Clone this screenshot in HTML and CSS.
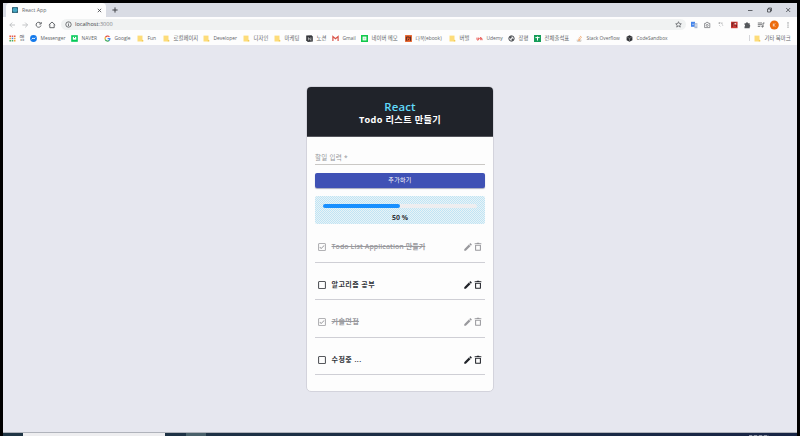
FILE: index.html
```html
<!DOCTYPE html>
<html lang="ko">
<head>
<meta charset="utf-8">
<title>React App</title>
<link rel="stylesheet" href="styles.css">
</head>
<body>
<svg class="defs" width="0" height="0">
  <symbol id="folder" viewBox="0 0 7 7"><path fill="#fddc79" d="M.5.6h5v5.9h-5z"/><path fill="#f3cb55" d="M4.8 4.9h1.5v1.6H4.8z"/></symbol>
  <symbol id="pencil" viewBox="0 0 24 24"><path d="M3 17.25V21h3.75L17.8 9.94l-3.75-3.75zm17.7-10.2a1 1 0 0 0 0-1.42l-2.34-2.34a1 1 0 0 0-1.41 0l-1.84 1.84 3.75 3.75z"/></symbol>
  <symbol id="trash" viewBox="0 0 24 24"><path fill-rule="evenodd" d="M5 19a2 2 0 0 0 2 2h10a2 2 0 0 0 2-2V7H5zM7.500 9h9v9.700h-9zm8-6-1-1h-5l-1 1H4v2.500h16V3z"/></symbol>
  <symbol id="checked" viewBox="0 0 24 24"><path d="M19 3H5a2 2 0 0 0-2 2v14a2 2 0 0 0 2 2h14a2 2 0 0 0 2-2V5a2 2 0 0 0-2-2zm0 16H5V5h14zM17.99 9l-1.41-1.42-6.59 6.59-2.58-2.57-1.42 1.41 4 3.99z"/></symbol>
  <symbol id="blank" viewBox="0 0 24 24"><path d="M19 5v14H5V5zm0-2H5a2 2 0 0 0-2 2v14a2 2 0 0 0 2 2h14a2 2 0 0 0 2-2V5a2 2 0 0 0-2-2z"/></symbol>
</svg>
<div class="window">
  <header class="tabs">
    <div class="tab">
      <svg class="react" viewBox="0 0 7 7"><rect width="7" height="7" rx="1" fill="#315a6b"/><g fill="none" stroke="#50c7e6" stroke-width=".6"><ellipse cx="3.5" cy="3.5" rx="3" ry="1.2"/><ellipse cx="3.5" cy="3.5" rx="3" ry="1.2" transform="rotate(60 3.5 3.5)"/><ellipse cx="3.5" cy="3.5" rx="3" ry="1.2" transform="rotate(120 3.5 3.5)"/></g><circle cx="3.5" cy="3.5" r=".7" fill="#61dafb"/></svg>
      <span class="tab-title">React App</span>
      <svg class="close" viewBox="0 0 5 5"><path d="M.8.8l3.4 3.4M4.2.8.8 4.2"/></svg>
    </div>
    <svg class="plus" viewBox="0 0 6 6"><path d="M3 .4v5.2M.4 3h5.2"/></svg>
    <svg class="controls" viewBox="0 0 44 8"><path d="M0 4.5h4.5M19.5 3h3v3h-3zM20.5 3V2h3v3h-1M38.2 2l4 4M42.2 2l-4 4"/></svg>
  </header>
  <nav class="toolbar">
    <svg class="nav-icons" viewBox="0 0 50 10"><g fill="none" stroke="#b4b6b9" stroke-width=".8"><path d="M6 5H.8M3.2 2.6.8 5l2.4 2.4M13.4 5h5.2M16.2 2.6 18.600 5l-2.400 2.400"/></g><g fill="none" stroke="#55585c" stroke-width=".9"><path d="M31.700 3.400A2.500 2.500 0 1 0 32 5.500M32.200 2v2h-2M39.800 5 43 2l3.200 3M40.800 4.400v3.300h4.400V4.400"/></g></svg>
    <div class="address">
      <svg class="info" viewBox="0 0 7 7"><circle cx="3.5" cy="3.5" r="2.7"/><path d="M3.5 3.1v2M3.5 1.8v.7"/></svg>
      <span class="url">localhost<i>:3000</i></span>
      <svg class="star" viewBox="0 0 7 7"><path d="M3.5.7l.8 1.9 2 .2-1.500 1.300.5 2-1.800-1.100-1.800 1.100.5-2L.7 2.800l2-.2z"/></svg>
    </div>
    <svg class="extensions" viewBox="0 0 104 10">
      <path fill="#4485ec" d="M0 1.8h4v5H0z"/><path fill="#a9b9d2" d="M3.4 3.2h3v5h-3z"/><path d="M1 4.3h2M4 5h1.8M5 4.5v2.4" stroke="#fff" stroke-width=".5"/>
      <g fill="none" stroke="#777a7e" stroke-width=".8"><path d="M13.6 3.4h1.2l.5-1h1.8l.5 1h1.2v4.2h-5.2z"/><circle cx="16.2" cy="5.4" r="1"/></g>
      <path d="M27.5 3c2-1 4 .5 4.3 3M28 5l1.5 1.5" fill="none" stroke="#d0d1d3"/><circle cx="28.3" cy="3.1" r=".6" fill="#777"/><circle cx="31" cy="3.1" r=".5" fill="#888"/>
      <path fill="#cd3a35" d="M40 1.7h6.6v6.5H40z"/><path d="M41.200 7V3h3.200M42.900 5h2.500v2" fill="none" stroke="#6c2225"/><path fill="#fff" d="M43.500 3.200h1.600v1.200h-1.600z"/>
      <path fill="#55585c" d="M53.500 3.300H55a1 1 0 0 1 2 0h1.700V5a1 1 0 0 1 0 1.800v1.400h-5.200V6.600a1 1 0 0 0 0-1.800z"/>
      <g fill="none" stroke="#55585c" stroke-width=".8"><path d="M66.800 3H71M66.800 4.700H71M66.800 6.400h2.500M72 6.600V3h1.500"/><circle cx="71.400" cy="6.600" r=".6"/></g>
      <circle cx="83.300" cy="5" r="4.500" fill="#ec6b0c"/><path d="M82.300 3.500v3M84.400 3.500 82.400 5l2 1.500" fill="none" stroke="#fff" stroke-width=".6"/>
      <g fill="#66696d"><circle cx="97" cy="2.900" r=".55"/><circle cx="97" cy="5" r=".55"/><circle cx="97" cy="7.100" r=".55"/></g>
    </svg>
  </nav>
  <nav class="bookmarks">
    <a><svg viewBox="0 0 7 7"><path fill="#e55a4d" d="M.4.5H2V2H.4zM2.7.5h1.6V2H2.7zM5 .5h1.5V2H5z"/><path fill="#f3a43b" d="M.4 2.7H2v1.5H.4zM5 2.7h1.5v1.5H5zM5 5h1.5v1.5H5z"/><path fill="#4daa62" d="M.4 5H2v1.5H.4zM2.7 5h1.6v1.5H2.7z"/><path fill="#4c83dd" d="M2.7 2.7h1.6v1.5H2.7z"/></svg><span>앱</span></a>
    <a><svg viewBox="0 0 7 7"><circle cx="3.5" cy="3.5" r="3.4" fill="#1379eb"/><path d="M1.7 4.3 3 2.9l1 1 1.3-1.2" fill="none" stroke="#fff" stroke-width=".9"/></svg><span class="latin">Messenger</span></a>
    <a><svg viewBox="0 0 7 7"><path fill="#05c958" d="M.2.2h6.6v6.6H.2z"/><path fill="#fff" d="M1.8 1.8h3.5v2.9H1.8z"/><path fill="#05c958" d="M3 1.8h1v1.3H3z"/></svg><span class="latin">NAVER</span></a>
    <a><svg viewBox="0 0 7 7"><g fill="none" stroke-width="1.2"><path stroke="#e4483b" d="M1.4 2.5A2.4 2.4 0 0 1 5.4 1.8"/><path stroke="#f3b51b" d="M1.3 4.6a2.4 2.4 0 0 1 .1-2.2"/><path stroke="#3aa757" d="M1.3 4.5a2.4 2.4 0 0 0 3.8 1"/><path stroke="#4688ec" d="M5 5.6q.9-.8.9-1.9H3.6"/></g></svg><span class="latin">Google</span></a>
    <a><svg><use href="#folder"/></svg><span class="latin">Fun</span></a>
    <a><svg><use href="#folder"/></svg><span>로컬페이지</span></a>
    <a><svg><use href="#folder"/></svg><span class="latin">Developer</span></a>
    <a><svg><use href="#folder"/></svg><span>디자인</span></a>
    <a><svg><use href="#folder"/></svg><span>마케팅</span></a>
    <a><svg viewBox="0 0 7 7"><path fill="#34363a" d="M.2.5 5.500.2l1.300 1.200v5.200l-5 .3L.2 5.300z"/><path d="M2.400 5.400V2.600l2.500 2.800V2.400" fill="none" stroke="#ddd" stroke-width=".7"/></svg><span>노션</span></a>
    <a><svg viewBox="0 0 7 7"><path fill="none" stroke="#d95247" stroke-width="1.2" d="M.9 6V1.5l2.6 2.3 2.6-2.3V6"/></svg><span class="latin">Gmail</span></a>
    <a><svg viewBox="0 0 7 7"><path fill="#12c94c" d="M0 0h7v7H0z"/><path fill="#fff" d="M1.6 1.6h3.8v3.8H1.6z"/><path fill="#b6ebc5" d="M2.5 2.5h2v2h-2z"/></svg><span class="memo">네이버 메모</span></a>
    <a><svg viewBox="0 0 7 7"><path fill="#e65b20" d="M.1.1h6.8v6.8H.1z"/><path d="M1.4 5.7V2h2.8v1.5M5.5 1.6v4.2M2.8 5.5l1-1.5" fill="none" stroke="#59302a"/></svg><span class="latin">다복(ebook)</span></a>
    <a><svg><use href="#folder"/></svg><span>버벌</span></a>
    <a><svg viewBox="0 0 7 7"><path d="M1 2.600v1.600q0 1 .8 1t.9-1V2.600M4.800 5.200V2.400L3.400 3.600M4.800 3.400q1.300-1.200 1.300 1.800" fill="none" stroke="#e7514c" stroke-width="1"/></svg><span class="latin">Udemy</span></a>
    <a><svg viewBox="0 0 7 7"><circle cx="3.5" cy="3.5" r="2.7" fill="#e9e9ea" stroke="#4b4e52"/><path fill="#4b4e52" d="M1 2.5l2-1.8 1 1.4-1.6 1.7zM4 3.6l2 .3-1.4 2-1.2-.5z"/></svg><span>장평</span></a>
    <a><svg viewBox="0 0 7 7"><path fill="#159d58" d="M0 0h7v7H0z"/><path stroke="#fff" d="M1.4 2.6h4.2M3.5 1.5v4"/></svg><span>전체출석표</span></a>
    <a><svg viewBox="0 0 7 7"><path d="M1.2 4.6v1.7h3.7V4.6" fill="none" stroke="#b9b3ad" stroke-width=".7"/><path d="M2 5.3h2M2.1 4l2.1.6M2.9 2.4l1.8 1.4M4.4.9l1 2" stroke="#ef9550" stroke-width=".8"/></svg><span class="narrow">Stack Overflow</span></a>
    <a><svg viewBox="0 0 7 7"><path fill="#303236" d="M3.5.2 6.4 1.8v3.4L3.5 6.8.6 5.2V1.8z"/><path d="M1.2 2.1l2.3 1.3 2.3-1.3M3.5 3.4V6" fill="none" stroke="#aaa" stroke-width=".5"/></svg><span class="narrow">CodeSandbox</span></a>
    <a class="other"><svg><use href="#folder"/></svg><span>기타 북마크</span></a>
  </nav>
  <main class="page">
    <section class="card">
      <header class="card-head"><h1>React</h1><h2>Todo 리스트 만들기</h2></header>
      <div class="card-body">
        <div class="field">할일 입력 *</div>
        <button class="add">추가하기</button>
        <div class="progress"><div class="track"><div class="fill"></div></div><span class="percent">50 %</span></div>
        <ul class="todos">
          <li class="done"><svg><use href="#checked"/></svg><span>Todo List Application 만들기</span><svg><use href="#pencil"/></svg><svg><use href="#trash"/></svg></li>
          <li><svg><use href="#blank"/></svg><span class="spaced">알고리즘 공부</span><svg><use href="#pencil"/></svg><svg><use href="#trash"/></svg></li>
          <li class="done"><svg><use href="#checked"/></svg><span class="spaced">기술면접</span><svg><use href="#pencil"/></svg><svg><use href="#trash"/></svg></li>
          <li><svg><use href="#blank"/></svg><span class="spaced">수정중 ...</span><svg><use href="#pencil"/></svg><svg><use href="#trash"/></svg></li>
        </ul>
      </div>
    </section>
  </main>
  <footer class="taskbar"><div class="search"></div><div class="task"></div><div class="clock"></div></footer>
</div>
</body>
</html>
```
FILE: styles.css
```css
* { box-sizing: border-box; }
body { margin: 0; background: #000; font-family: "Open Sans", "Noto Sans CJK KR", sans-serif; }
svg { display: block; flex: none; }
.defs { position: absolute; }
.window { width: 794px; height: 433px; margin: 3px 3px 0; display: flex; flex-direction: column; overflow: hidden; background: #fdfdfd; }

.tabs { flex: 0 0 14px; display: flex; align-items: center; background: #d9dce4; }
.tab { width: 100px; height: 14px; margin-left: 3px; padding: 0 4px 0 6px; display: flex; align-items: center; background: #fdfdfd; border-radius: 4px 4px 0 0; }
.react { width: 6px; height: 6px; }
.tab-title { flex: 1; margin-left: 4px; font-size: 5.2px; line-height: 8px; color: #65686c; }
.close { width: 5px; height: 5px; stroke: #404347; stroke-width: .8; }
.plus { width: 6px; height: 6px; margin-left: 6px; stroke: #404347; stroke-width: 1; }
.controls { width: 44px; height: 8px; margin: 0 5px 0 auto; fill: none; stroke: #404347; stroke-width: .8; }

.toolbar { flex: 0 0 15px; display: flex; align-items: center; padding: 0 0 0 6px; }
.nav-icons { width: 50px; height: 10px; }
.address { width: 625px; height: 11px; margin-left: 2px; padding: 0 4px; display: flex; align-items: center; background: #f0f2f2; border-radius: 6px; }
.info { width: 7px; height: 7px; fill: none; stroke: #55585c; stroke-width: .8; }
.url { margin-left: 3px; font-size: 5.6px; line-height: 9px; color: #404347; }
.url i { font-style: normal; color: #85888c; }
.star { width: 7px; height: 7px; margin-left: auto; fill: none; stroke: #55585c; stroke-width: .7; }
.extensions { width: 104px; height: 10px; margin-left: 5px; }

.bookmarks { flex: 0 0 13px; display: grid; align-items: center; padding: 0 0 1px 6px; grid-template-columns: 21px 41px 33px 33px 26px 40px 40px 31px 32px 26px 29px 44px 44px 27px 32px 26px 42px 50px 121px 50px; font-size: 5.4px; line-height: 8px; color: #606367; }
.bookmarks a { display: flex; align-items: center; white-space: nowrap; }
.bookmarks svg { width: 7px; height: 7px; }
.bookmarks span { margin-left: 3.5px; }
.bookmarks .latin { font-size: 4.9px; }
.bookmarks .narrow { font-size: 4.8px; }
.other { margin-left: 7px; position: relative; }
.other::before { content: ""; position: absolute; left: -5px; width: 1px; height: 6px; background: #d5d6da; }

.page { flex: 0 0 388px; padding-top: 41px; background: #e6e7ef; border-bottom: 1px solid #b0b3bb; }
.card { width: 188px; height: 306px; margin-left: 303px; background: #fdfdfd; border: 1px solid #d3d3dc; border-radius: 5px; overflow: hidden; }
.card-head { height: 50px; padding-top: 13px; background: #20232a; border-bottom: 1px solid #54555c; text-align: center; }
h1, h2 { margin: 0; }
h1 { font-size: 11.4px; line-height: 14px; font-weight: 600; letter-spacing: .2px; color: #61dafb; }
h2 { font-size: 9.2px; line-height: 12px; font-weight: 700; letter-spacing: .35px; color: #fff; }
.card-body { padding: 15px 8px 0; }
.field { height: 13px; border-bottom: 1px solid #cac8c5; font-size: 6.5px; line-height: 12px; letter-spacing: .3px; color: #94969a; }
.add { display: block; width: 100%; height: 15px; margin-top: 8px; padding: 0; border: 0; border-radius: 2px; background: #3f51b5; box-shadow: 0 1px 1px #a6a9bd; color: #fff; font: 400 6px/15px "Open Sans", "Noto Sans CJK KR", sans-serif; letter-spacing: .3px; }
.progress { height: 28px; margin-top: 8px; padding: 8px 8px 0; border-radius: 2px; background: repeating-conic-gradient(#bfe4f5 0 25%, #e9f3f6 0 50%) 0 0 / 2px 2px; text-align: center; }
.track { height: 4px; border-radius: 2px; background: #eeeef0; }
.fill { width: 50%; height: 4px; border-radius: 2px; background: #1890ff; }
.percent { display: block; margin-top: 4px; font-size: 7px; line-height: 11px; font-weight: 700; color: #333539; }
.todos { list-style: none; margin: 1px 0 0; padding: 0; }
.todos li { height: 37.5px; display: flex; align-items: center; padding: 8px 2px 0; border-bottom: 1px solid #cfcfd5; font-size: 7px; line-height: 10px; font-weight: 600; letter-spacing: .08px; color: #303338; }
.todos svg { width: 10px; height: 10px; fill: #202329; }
.todos span { flex: 1; margin-left: 4.5px; white-space: nowrap; }
.todos .spaced { letter-spacing: .45px; }
.todos .done { color: #99999d; text-decoration: line-through; }
.todos .done svg { fill: #99999d; }

.taskbar { flex: 0 0 3px; display: flex; background: linear-gradient(90deg, #203645, #182545); }
.search { width: 142px; margin-left: 20px; background: #eeeef0; }
.task { width: 20px; margin-left: 21px; background: #49606a; }
.clock { width: 20px; height: 1px; margin: 2px 28px 0 auto; background: repeating-linear-gradient(90deg, #8c94a5 0 3px, #3c4860 3px 5px); }
```
